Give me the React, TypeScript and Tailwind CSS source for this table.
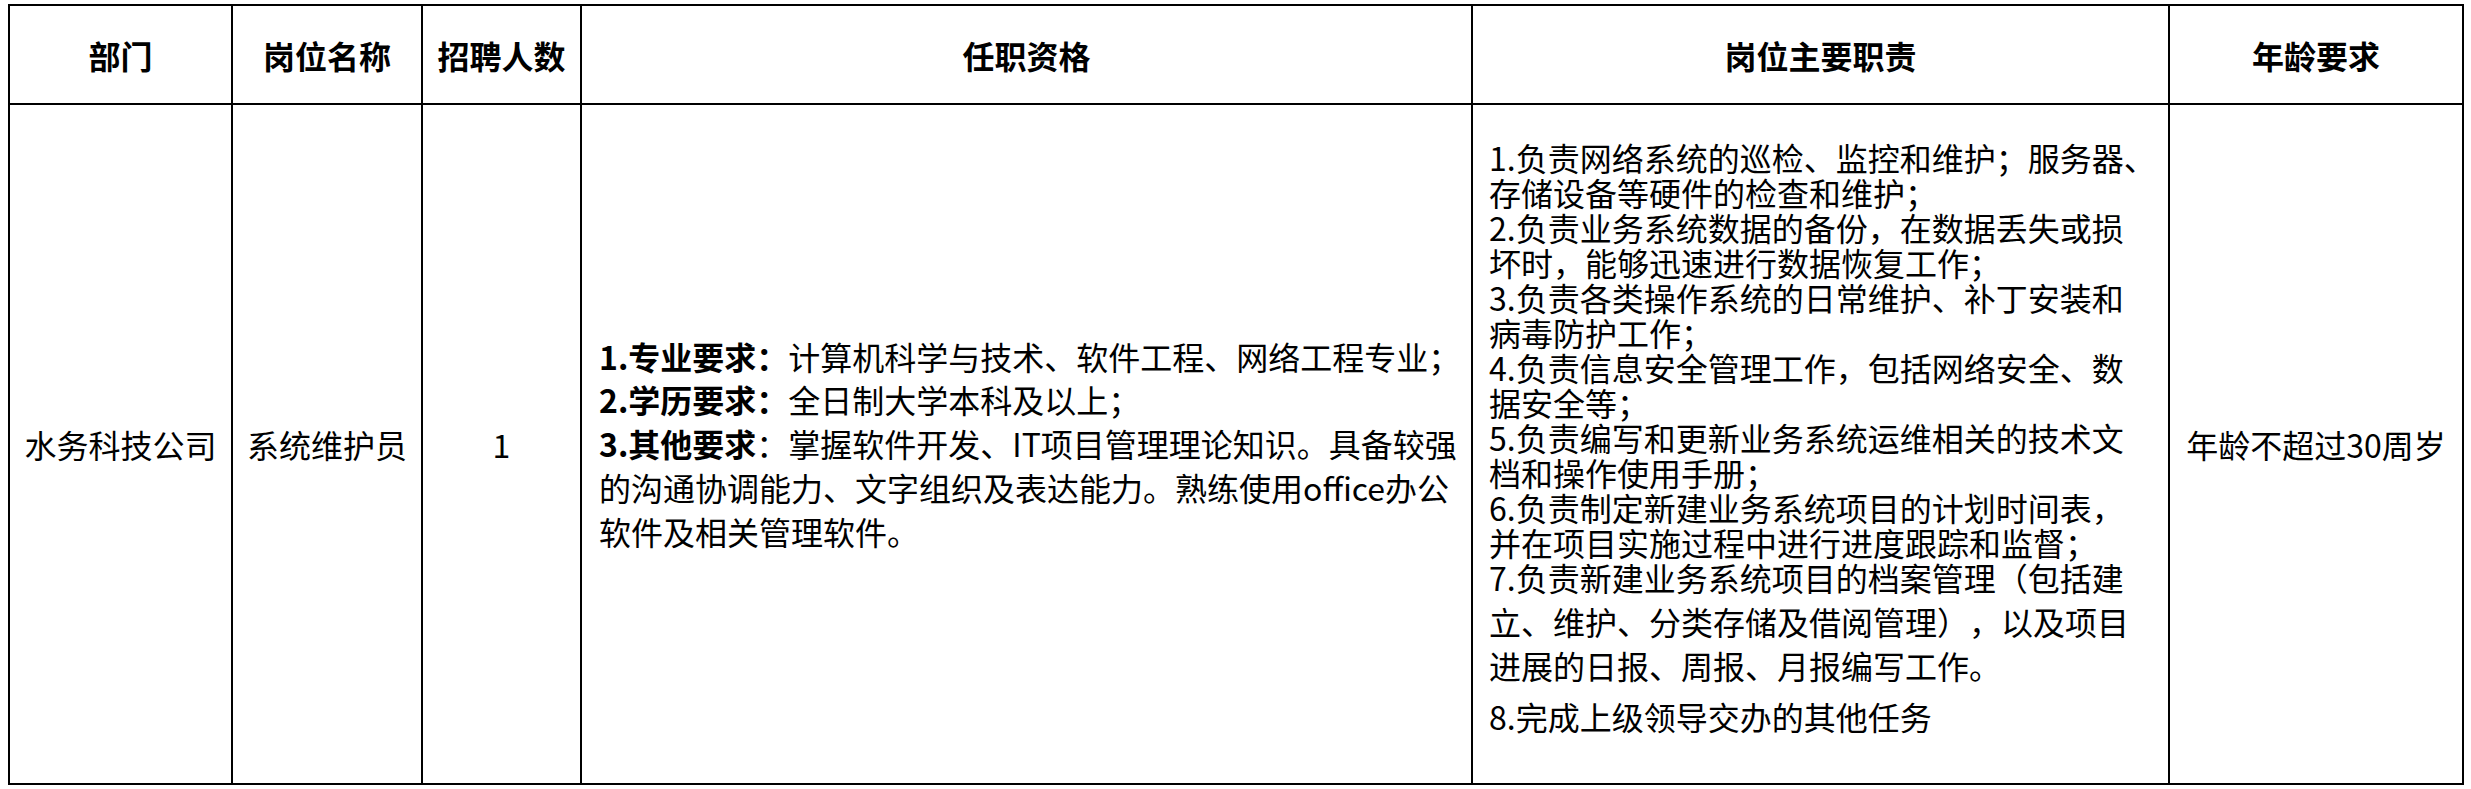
import React from "react";

const duties1 = [
  "1.负责网络系统的巡检、监控和维护；服务器、",
  "存储设备等硬件的检查和维护；",
  "2.负责业务系统数据的备份，在数据丢失或损",
  "坏时，能够迅速进行数据恢复工作；",
  "3.负责各类操作系统的日常维护、补丁安装和",
  "病毒防护工作；",
  "4.负责信息安全管理工作，包括网络安全、数",
  "据安全等；",
  "5.负责编写和更新业务系统运维相关的技术文",
  "档和操作使用手册；",
  "6.负责制定新建业务系统项目的计划时间表，",
  "并在项目实施过程中进行进度跟踪和监督；",
  "7.负责新建业务系统项目的档案管理（包括建",
];

const Header = ({ children }: { children: React.ReactNode }) => (
  <div className="flex items-center justify-center border-b-2 border-r-2 border-black font-bold">
    {children}
  </div>
);

export default function App() {
  return (
    <div className="min-h-screen w-full bg-white pl-[8px] pt-[4px] font-['Noto_Sans_CJK_SC',sans-serif] text-[32px] text-black [text-spacing-trim:space-all]">
      <div className="grid w-[2456px] grid-cols-[223px_190px_159px_891px_697px_294px] grid-rows-[99px_680px] border-l-2 border-t-2 border-black">
        <Header>部门</Header>
        <Header>岗位名称</Header>
        <Header>招聘人数</Header>
        <Header>任职资格</Header>
        <Header>岗位主要职责</Header>
        <Header>年龄要求</Header>

        <div className="flex items-center justify-center border-b-2 border-r-2 border-black">
          水务科技公司
        </div>
        <div className="flex items-center justify-center border-b-2 border-r-2 border-black">
          系统维护员
        </div>
        <div className="flex items-center justify-center border-b-2 border-r-2 border-black">
          1
        </div>
        <div className="flex items-center border-b-2 border-r-2 border-black pl-[17px]">
          <div className="whitespace-nowrap leading-[43.75px]">
            <div>
              <span className="font-bold">1.专业要求：</span>计算机科学与技术、软件工程、网络工程专业；
            </div>
            <div>
              <span className="font-bold">2.学历要求：</span>全日制大学本科及以上；
            </div>
            <div>
              <span className="font-bold">3.其他要求</span>：掌握软件开发、IT项目管理理论知识。具备较强
            </div>
            <div>的沟通协调能力、文字组织及表达能力。熟练使用office办公</div>
            <div>软件及相关管理软件。</div>
          </div>
        </div>
        <div className="flex items-start border-b-2 border-r-2 border-black pl-[16px] pt-[35px]">
          <div className="whitespace-nowrap">
            <div className="leading-[35px]">
              {duties1.map((l, i) => (
                <div key={i}>{l}</div>
              ))}
            </div>
            <div className="mt-[4px] leading-[44px]">
              <div>立、维护、分类存储及借阅管理），以及项目</div>
              <div>进展的日报、周报、月报编写工作。</div>
            </div>
            <div className="mt-[12px] leading-[35px]">8.完成上级领导交办的其他任务</div>
          </div>
        </div>
        <div className="flex items-center justify-center border-b-2 border-r-2 border-black">
          年龄不超过30周岁
        </div>
      </div>
    </div>
  );
}
